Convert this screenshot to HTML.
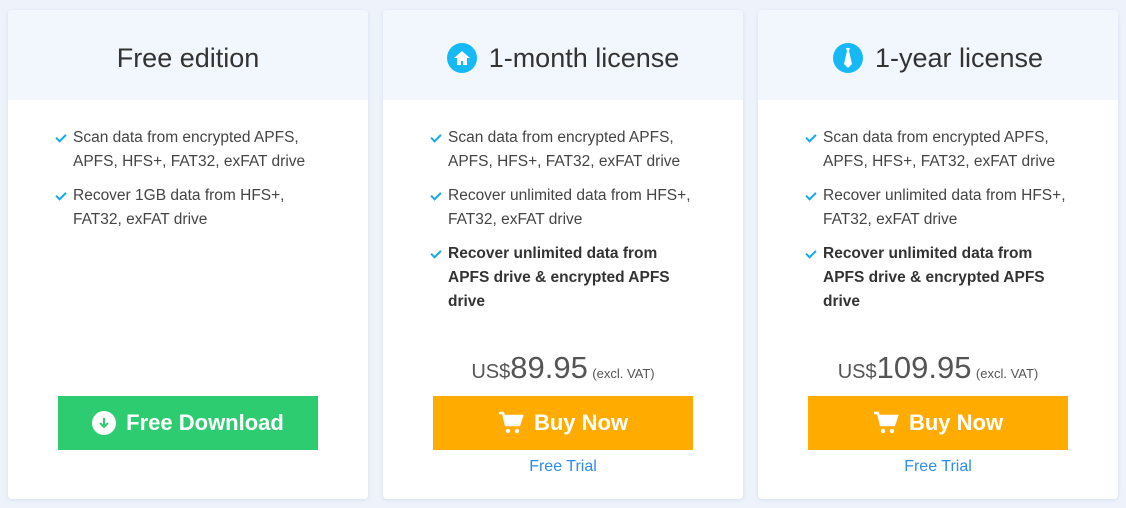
<!DOCTYPE html>
<html><head><style>
body{margin:0;width:1126px;height:508px;background:#eef3fb;font-family:"Liberation Sans",sans-serif;position:relative;overflow:hidden}
.card{position:absolute;top:10px;width:360px;height:489px;background:#fff;border-radius:4px;box-shadow:0 1px 4px rgba(180,195,220,.4)}
.hd{height:90px;padding-top:6px;box-sizing:border-box;background:#f2f7fe;border-radius:4px 4px 0 0;display:flex;align-items:center;justify-content:center;font-size:27px;color:#333}
.ic{width:30px;height:30px;border-radius:50%;background:#15b9f5;margin-right:12px;display:flex;align-items:center;justify-content:center}
ul{list-style:none;margin:0;padding:0;position:absolute;left:65px;top:116px;width:280px;white-space:nowrap}
li{position:relative;font-size:15.5px;line-height:24px;color:#444;margin-bottom:10px}
li:before{content:"";position:absolute;left:-17px;top:8px;width:8px;height:4px;border-left:2px solid #15a9f0;border-bottom:2px solid #15a9f0;transform:rotate(-45deg)}
li b{color:#333}
.price{position:absolute;top:340px;left:0;width:100%;text-align:center;color:#555}
.btn{position:absolute;left:50px;top:386px;width:260px;height:54px;display:flex;align-items:center;justify-content:center;color:#fff;font-weight:bold;font-size:22px}
.trial{position:absolute;top:448px;width:100%;text-align:center;color:#2d8cf0;font-size:16px}
</style></head><body>
<div class="card" style="left:8px">
<div class="hd">Free edition</div>
<ul><li>Scan data from encrypted APFS,<br>APFS, HFS+, FAT32, exFAT drive</li><li>Recover 1GB data from HFS+,<br>FAT32, exFAT drive</li></ul>
<div class="btn" style="background:#2ecc71"><span style="width:24px;height:24px;border-radius:50%;background:#fff;margin-right:10px;display:flex;align-items:center;justify-content:center"><svg width="14" height="14" viewBox="0 0 14 14"><path d="M7 2v9M3 7l4 4 4-4" stroke="#2ecc71" stroke-width="2" fill="none"/></svg></span>Free Download</div>
</div>
<div class="card" style="left:383px">
<div class="hd"><span class="ic"><svg width="18" height="18" viewBox="0 0 18 18"><path d="M9 2L1 9h3v7h4v-4h2v4h4V9h3z" fill="#fff"/></svg></span>1-month license</div>
<ul><li>Scan data from encrypted APFS,<br>APFS, HFS+, FAT32, exFAT drive</li><li>Recover unlimited data from HFS+,<br>FAT32, exFAT drive</li><li><b>Recover unlimited data from<br>APFS drive &amp; encrypted APFS<br>drive</b></li></ul>
<div class="price"><span style="font-size:20px">US$</span><span style="font-size:31px">89.95</span> <span style="font-size:13px">(excl. VAT)</span></div>
<div class="btn" style="background:#ffab00"><svg width="26" height="24" viewBox="0 0 26 24" style="margin-right:10px"><path d="M1 2h4l3 12h13l3-9H7" stroke="#fff" stroke-width="2.5" fill="#fff"/><circle cx="10" cy="20" r="2.2" fill="#fff"/><circle cx="19" cy="20" r="2.2" fill="#fff"/></svg>Buy Now</div>
<div class="trial">Free Trial</div>
</div>
<div class="card" style="left:758px">
<div class="hd"><span class="ic"><svg width="16" height="22" viewBox="0 0 16 22"><path d="M6 1h4l-1 3 3 13-4 4-4-4 3-13z" fill="#fff"/></svg></span>1-year license</div>
<ul><li>Scan data from encrypted APFS,<br>APFS, HFS+, FAT32, exFAT drive</li><li>Recover unlimited data from HFS+,<br>FAT32, exFAT drive</li><li><b>Recover unlimited data from<br>APFS drive &amp; encrypted APFS<br>drive</b></li></ul>
<div class="price"><span style="font-size:20px">US$</span><span style="font-size:31px">109.95</span> <span style="font-size:13px">(excl. VAT)</span></div>
<div class="btn" style="background:#ffab00"><svg width="26" height="24" viewBox="0 0 26 24" style="margin-right:10px"><path d="M1 2h4l3 12h13l3-9H7" stroke="#fff" stroke-width="2.5" fill="#fff"/><circle cx="10" cy="20" r="2.2" fill="#fff"/><circle cx="19" cy="20" r="2.2" fill="#fff"/></svg>Buy Now</div>
<div class="trial">Free Trial</div>
</div>
</body></html>
